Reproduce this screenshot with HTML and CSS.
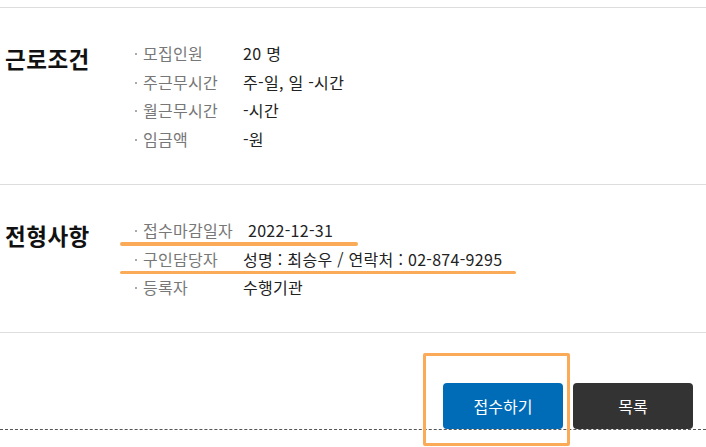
FILE: index.html
```html
<!DOCTYPE html>
<html lang="ko">
<head>
    <meta charset="UTF-8">
    <meta name="viewport" content="width=device-width, initial-scale=1.0">
    <title>채용정보 상세</title>
    <link rel="stylesheet" href="styles.css">
</head>
<body>
    <div class="detail">
        <div class="section">
            <h3 class="section-title">근로조건</h3>
            <ul class="info-list">
                <li><span class="label">모집인원</span><span class="value">20 명</span></li>
                <li><span class="label">주근무시간</span><span class="value">주-일, 일 -시간</span></li>
                <li><span class="label">월근무시간</span><span class="value">-시간</span></li>
                <li><span class="label">임금액</span><span class="value">-원</span></li>
            </ul>
        </div>

        <div class="section">
            <h3 class="section-title">전형사항</h3>
            <ul class="info-list">
                <li class="marked mark-short"><span class="label">접수마감일자</span><span class="value date">2022-12-31</span></li>
                <li class="marked mark-long"><span class="label">구인담당자</span><span class="value">성명 : 최승우 / 연락처 : 02-874-9295</span></li>
                <li><span class="label">등록자</span><span class="value">수행기관</span></li>
            </ul>
        </div>

        <div class="btn-area">
            <a href="#" class="btn btn-apply">접수하기</a>
            <a href="#" class="btn btn-list">목록</a>
        </div>
    </div>
</body>
</html>
```

FILE: styles.css
```css
*,
*::before,
*::after {
    margin: 0;
    padding: 0;
    box-sizing: border-box;
}

html,
body {
    height: 100%;
}

body {
    font-family: "Noto Sans CJK KR", "Noto Sans", sans-serif;
    background: #fff;
    color: #222;
    overflow: hidden;
}

.detail {
    min-height: 447px;
    padding-top: 7px;
}

.section {
    display: flex;
    border-top: 1px solid #ddd;
    padding: 31px 0 31px 5px;
}

.section + .section {
    padding-bottom: 30px;
}

.section-title {
    width: 130px;
    height: 38px;
    font-size: 22.5px;
    font-weight: 700;
    line-height: 38px;
    color: #111;
    letter-spacing: 0.5px;
}

.info-list {
    list-style: none;
}

.info-list li {
    position: relative;
    display: flex;
    align-items: center;
    height: 28.5px;
    font-size: 16px;
    line-height: 20px;
}

.info-list .label {
    display: flex;
    align-items: center;
    width: 108px;
    color: #777;
    letter-spacing: 0.3px;
}

.info-list .label::before {
    content: "";
    width: 2px;
    height: 2px;
    margin: 2px 6px 0 0;
    background: #aaa;
}

.info-list .value {
    color: #222;
    letter-spacing: 0.3px;
}

.info-list .value.date {
    margin-left: 5px;
}

/* orange highlight marks */
.marked::after {
    content: "";
    position: absolute;
    left: -15px;
    bottom: -1px;
    height: 3.5px;
    border-radius: 2px;
    background: #fbaa57;
}

.mark-short::after {
    width: 238px;
}

.mark-long::after {
    width: 396px;
}

.btn-area {
    display: flex;
    justify-content: flex-end;
    gap: 10px;
    border-top: 1px solid #ddd;
    border-bottom: 1px dashed #555;
    padding: 50px 13px 0 0;
}

.btn {
    position: relative;
    display: flex;
    align-items: center;
    justify-content: center;
    width: 120px;
    height: 46px;
    border-radius: 4px;
    color: #fff;
    font-size: 16px;
    text-decoration: none;
}

.btn-apply {
    background: #006bb7;
}

.btn-apply::after {
    content: "";
    position: absolute;
    left: -20px;
    top: -30px;
    width: 147px;
    height: 93px;
    border: 3px solid #fbaa57;
    border-radius: 2px;
}

.btn-list {
    background: #333;
}
```
